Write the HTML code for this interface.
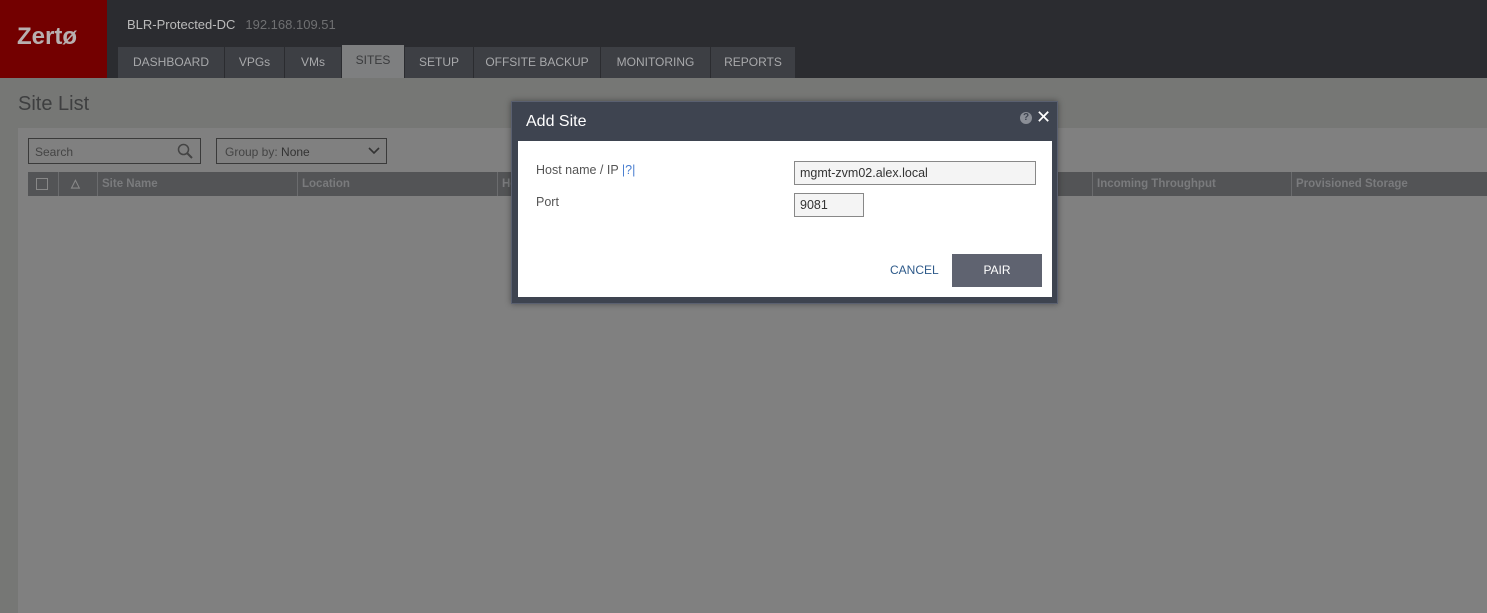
<!DOCTYPE html>
<html><head><style>
*{margin:0;padding:0;box-sizing:border-box}
body{width:1487px;height:613px;overflow:hidden;background:#767775;font-family:"Liberation Sans",sans-serif;position:relative}
.top{position:absolute;left:0;top:0;width:1487px;height:78px;background:#2b2c30}
.logo{position:absolute;left:0;top:0;width:107px;height:78px;background:#730000;color:#b8b0b0;font-weight:bold;font-size:24px;padding:23px 0 0 17px}
.site{position:absolute;left:127px;top:17px;color:#bbbbbb;font-size:13px}
.site span{color:#6f7072;margin-left:10px}
.tab{position:absolute;top:47px;height:31px;background:#3d3f44;color:#a8a9ab;font-size:12px;text-align:center;line-height:31px}
.tab.act{background:#7e7f80;color:#3a3b3d;top:45px;height:33px;line-height:30px}
.title{position:absolute;left:18px;top:93px;font-size:20px;color:#3e3f40}
.panel{position:absolute;left:18px;top:128px;width:1469px;height:485px;background:#808080}
.box{position:absolute;border:1px solid #3a3a3a;height:26px;font-size:12px;color:#444;padding:6px 6px}
.hdr{position:absolute;left:28px;top:172px;width:1459px;height:24px;background:#535456}
.hdr div{position:absolute;top:0;height:24px;border-left:1px solid #6b6c6e;color:#7a7b7d;font-size:11.5px;font-weight:bold;line-height:24px;padding-left:4px}
.dlg{position:absolute;left:511px;top:101px;width:547px;height:203px;background:#3e4450;box-shadow:0 0 6px rgba(0,0,0,.4);border:1px solid #5a6070}
.dlg .t{position:absolute;left:14px;top:11px;color:#fff;font-size:16px}
.body{position:absolute;left:6px;top:39px;width:534px;height:156px;background:#fff}
.lbl{position:absolute;font-size:12.5px;color:#555}
.inp{position:absolute;background:#f4f4f4;border:1px solid #888;font-size:12.5px;color:#333;padding:4px 5px;height:24px}
</style></head><body>
<div class="top"></div>
<div class="logo">Zertø</div>
<div class="site">BLR-Protected-DC<span>192.168.109.51</span></div>
<div class="tab" style="left:118px;width:106px">DASHBOARD</div>
<div class="tab" style="left:225px;width:59px">VPGs</div>
<div class="tab" style="left:285px;width:56px">VMs</div>
<div class="tab act" style="left:342px;width:62px">SITES</div>
<div class="tab" style="left:405px;width:68px">SETUP</div>
<div class="tab" style="left:474px;width:126px">OFFSITE BACKUP</div>
<div class="tab" style="left:601px;width:109px">MONITORING</div>
<div class="tab" style="left:711px;width:84px">REPORTS</div>
<div class="title">Site List</div>
<div class="panel"></div>
<div class="box" style="left:28px;top:138px;width:173px">Search<svg style="position:absolute;right:7px;top:4px" width="16" height="16"><circle cx="6.5" cy="6.5" r="5" fill="none" stroke="#444" stroke-width="1.5"/><line x1="10" y1="10" x2="15" y2="15" stroke="#444" stroke-width="2"/></svg></div>
<div class="box" style="left:216px;top:138px;width:171px;padding-left:8px">Group by: <span style="color:#333">None</span><svg style="position:absolute;right:6px;top:8px" width="12" height="8"><path d="M1 1l5 5 5-5" fill="none" stroke="#333" stroke-width="1.6"/></svg></div>
<div class="hdr">
<div style="left:0;width:30px;border:none;padding-left:8px"><span style="display:inline-block;width:12px;height:12px;border:1px solid #888;margin-top:6px"></span></div>
<div style="left:30px;width:39px;color:#888;padding-left:12px">△</div>
<div style="left:69px;width:200px">Site Name</div>
<div style="left:269px;width:200px">Location</div>
<div style="left:469px;width:20px">Ho</div>
<div style="left:1064px;width:200px">Incoming Throughput</div>
<div style="left:1263px;width:200px">Provisioned Storage</div>
</div>
<div class="dlg">
<div class="t">Add Site</div>
<div style="position:absolute;left:508px;top:10px;width:12px;height:12px;border-radius:50%;background:#8a8e96;color:#3e4450;font-size:10px;font-weight:bold;text-align:center;line-height:12px">?</div>
<div style="position:absolute;left:524px;top:5px;color:#fff;font-size:18px">✕</div>
<div class="body">
<div class="lbl" style="left:18px;top:22px">Host name / IP <span style="color:#4a7fd0">|?|</span></div>
<div class="lbl" style="left:18px;top:54px">Port</div>
<div class="inp" style="left:276px;top:20px;width:242px">mgmt-zvm02.alex.local</div>
<div class="inp" style="left:276px;top:52px;width:70px">9081</div>
<div style="position:absolute;left:372px;top:122px;color:#2e5a8a;font-size:12px">CANCEL</div>
<div style="position:absolute;left:434px;top:113px;width:90px;height:33px;background:#5f6370;color:#fff;font-size:12px;text-align:center;line-height:33px">PAIR</div>
</div>
</div>
</body></html>
